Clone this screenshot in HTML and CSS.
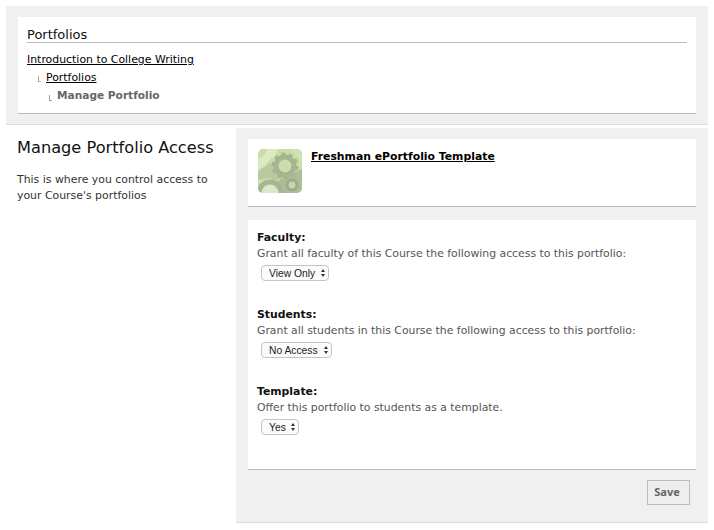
FILE: index.html
```html
<!DOCTYPE html>
<html lang="en">
<head>
    <meta charset="UTF-8">
    <title>Manage Portfolio Access</title>
    <link rel="stylesheet" href="styles.css">
</head>
<body>
    <div class="top-band">
        <div class="crumb-card">
            <h2 class="crumb-title">Portfolios</h2>
            <div class="crumb-row"><a href="#">Introduction to College Writing</a></div>
            <div class="crumb-row level-1"><span class="crumb-mark mark-orange"></span><a href="#">Portfolios</a></div>
            <div class="crumb-row level-2"><span class="crumb-mark mark-blue"></span><strong>Manage Portfolio</strong></div>
        </div>
    </div>

    <div class="main">
        <div class="sidebar">
            <h1>Manage Portfolio Access</h1>
            <p>This is where you control access to your Course's portfolios</p>
        </div>

        <div class="panel">
            <div class="card template-card">
                <svg class="thumb" width="44" height="44" viewBox="0 0 44 44">
                    <defs>
                        <clipPath id="thumbClip"><rect width="44" height="44" rx="5"/></clipPath>
                        <filter id="soft"><feGaussianBlur stdDeviation="0.6"/></filter>
                    </defs>
                    <g clip-path="url(#thumbClip)">
                        <rect width="44" height="44" fill="#c9dfa6"/>
                        <g filter="url(#soft)">
                            <path d="M10 0H20L17 7L11 11L7 17L0 21V10L6 7Z" fill="#dbe9c4"/>
                            <path d="M0 23L6 18L12 14L16 18L15 23L22 26L20 32L10 29L0 31Z" fill="#b9ca9f"/>
                            <path d="M34 0H44V12L38 6Z" fill="#d0e3b2"/>
                            <path d="M18 34L28 26L36 24L44 20V44H24Z" fill="#aebd97"/>
                            <circle cx="27" cy="17" r="9" fill="none" stroke="#a6b490" stroke-width="5"/>
                            <circle cx="27" cy="17" r="12" fill="none" stroke="#a6b490" stroke-width="3" stroke-dasharray="4 3.5"/>
                            <circle cx="27" cy="17" r="6" fill="#cbdead"/>
                            <circle cx="12" cy="44" r="11" fill="#dce8c8" stroke="#a8b594" stroke-width="5"/>
                            <circle cx="34" cy="36" r="5" fill="#c6d6ae" stroke="#9dac88" stroke-width="3"/>
                        </g>
                    </g>
                </svg>
                <a class="template-link" href="#">Freshman ePortfolio Template</a>
            </div>

            <div class="card form-card">
                <div class="field">
                    <div class="field-label">Faculty:</div>
                    <div class="field-text">Grant all faculty of this Course the following access to this portfolio:</div>
                    <span class="select-wrap"><select><option>View Only</option></select></span>
                </div>
                <div class="field">
                    <div class="field-label">Students:</div>
                    <div class="field-text">Grant all students in this Course the following access to this portfolio:</div>
                    <span class="select-wrap"><select><option>No Access</option></select></span>
                </div>
                <div class="field">
                    <div class="field-label">Template:</div>
                    <div class="field-text">Offer this portfolio to students as a template.</div>
                    <span class="select-wrap"><select><option>Yes</option></select></span>
                </div>
            </div>

            <div class="actions">
                <button type="button" class="save-btn">Save</button>
            </div>
        </div>
    </div>
</body>
</html>
```

FILE: styles.css
```css
body {
    font-family: "DejaVu Sans", Verdana, sans-serif;
    font-size: 10.9px;
    color: #111;
    background-color: #fff;
    margin: 0;
    padding: 6px 6px 0;
}

a {
    color: #000;
}

.top-band {
    background-color: #f0f0f0;
    border-bottom: 1px solid #ddd;
    padding: 11px 12px 10px;
}

.crumb-card {
    background-color: #fff;
    border-bottom: 1px solid #bbb;
    padding: 10px 9px 9px;
    height: 77px;
}

.crumb-title {
    font-size: 13px;
    font-weight: normal;
    margin: 0 0 8px;
    padding-bottom: 0;
    border-bottom: 1px solid #bbb;
}

.crumb-row {
    height: 18px;
    line-height: 18px;
}

.level-1 {
    padding-left: 11px;
}

.level-2 {
    padding-left: 22px;
    margin-top: -1px;
}

.crumb-mark {
    display: inline-block;
    width: 2px;
    height: 5px;
    margin-right: 5px;
    vertical-align: -1px;
    border-left: 1px solid;
    border-bottom: 1px solid;
}

.mark-orange {
    border-color: #d49a7c;
}

.mark-blue {
    border-color: #8ca6c0;
}

.crumb-row strong {
    color: #666;
    font-size: 10.6px;
    vertical-align: 1px;
}

.main {
    display: flex;
    gap: 18px;
    margin-top: 3px;
}

.sidebar {
    width: 212px;
    flex-shrink: 0;
    padding: 10px 0 0 11px;
    box-sizing: border-box;
}

.sidebar h1 {
    font-size: 16.2px;
    font-weight: normal;
    margin: 0 0 15px;
}

.sidebar p {
    margin: 0;
    line-height: 16px;
    color: #333;
}

.panel {
    flex: 1;
    background-color: #f0f0f0;
    border-bottom: 1px solid #ddd;
    padding: 11px 12px 0;
    height: 383px;
}

.card {
    background-color: #fff;
    border-bottom: 1px solid #bbb;
}

.template-card {
    display: flex;
    gap: 9px;
    align-items: flex-start;
    height: 57px;
    padding: 10px 10px 0;
    margin-bottom: 13px;
}

.thumb {
    flex-shrink: 0;
}

.template-link {
    font-weight: bold;
    font-size: 10.85px;
    margin-top: 1px;
}

.form-card {
    height: 238px;
    padding: 11px 9px 0;
    font-size: 10.85px;
}

.field {
    height: 77px;
}

.field-label {
    font-weight: bold;
    line-height: 13px;
    margin-bottom: 2px;
}

.field-text {
    color: #555;
    line-height: 15px;
    margin-bottom: 4px;
}

.select-wrap {
    position: relative;
    display: inline-block;
    margin-left: 4px;
    line-height: 0;
}

/* up/down arrows of the select */
.select-wrap::before,
.select-wrap::after {
    content: "";
    position: absolute;
    right: 4px;
    border-left: 2.5px solid transparent;
    border-right: 2.5px solid transparent;
}

.select-wrap::before {
    top: 4px;
    border-bottom: 3px solid #333;
}

.select-wrap::after {
    top: 9px;
    border-top: 3px solid #333;
}

select {
    appearance: none;
    font-family: "Liberation Sans", Arial, sans-serif;
    font-size: 10.3px;
    color: #222;
    height: 16px;
    padding: 0 12px 0 7px;
    background-color: #fbfbfb;
    border: 1px solid #c4c4c4;
    border-radius: 4px;
}

.actions {
    display: flex;
    justify-content: flex-end;
    padding: 10px 6px 0 0;
}

.save-btn {
    font-family: "Noto Sans", Verdana, sans-serif;
    font-size: 11px;
    font-weight: bold;
    color: #666;
    background-color: #eee;
    border: 1px solid #bbb;
    width: 43px;
    height: 25px;
    padding: 0 3px 2px 0;
}
```
